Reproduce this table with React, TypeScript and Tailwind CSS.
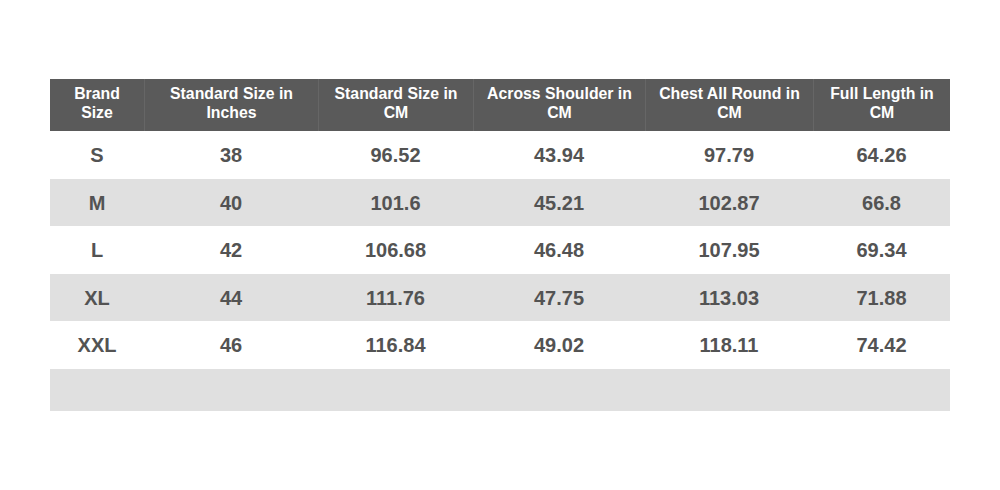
import React from "react";

const headers = [
  ["Brand", "Size"],
  ["Standard Size in", "Inches"],
  ["Standard Size in", "CM"],
  ["Across Shoulder in", "CM"],
  ["Chest All Round in", "CM"],
  ["Full Length in", "CM"],
];

const rows = [
  ["S", "38", "96.52", "43.94", "97.79", "64.26"],
  ["M", "40", "101.6", "45.21", "102.87", "66.8"],
  ["L", "42", "106.68", "46.48", "107.95", "69.34"],
  ["XL", "44", "111.76", "47.75", "113.03", "71.88"],
  ["XXL", "46", "116.84", "49.02", "118.11", "74.42"],
];

const heights = ["h-[48px]", "h-[47px]", "h-[48px]", "h-[47px]", "h-[48px]"];

export default function App() {
  return (
    <div
      className="w-[1000px] h-[490px] bg-white pt-[79px] px-[50px]"
      style={{ fontFamily: '"Liberation Sans", Arial, sans-serif' }}
    >
      <div className="w-[900px]">
        <div className="grid grid-cols-[94px_174px_155px_172px_168px_137px] h-[52px] bg-[#5a5a5a]">
          {headers.map((h, i) => (
            <div
              key={i}
              className={`flex flex-col items-center justify-center text-white font-bold text-[15.8px] leading-[19px] pb-[5px] ${
                i > 0 ? "border-l border-[#666666]" : ""
              }`}
            >
              <span>{h[0]}</span>
              <span>{h[1]}</span>
            </div>
          ))}
        </div>
        {rows.map((r, ri) => (
          <div
            key={ri}
            className={`grid grid-cols-[94px_174px_155px_172px_168px_137px] ${heights[ri]} ${
              ri % 2 === 1 ? "bg-[#e0e0e0]" : "bg-white"
            }`}
          >
            {r.map((c, ci) => (
              <div
                key={ci}
                className="flex items-center justify-center font-bold text-[20px] text-[#535353]"
              >
                {c}
              </div>
            ))}
          </div>
        ))}
        <div className="h-[42px] bg-[#e0e0e0]" />
      </div>
    </div>
  );
}
